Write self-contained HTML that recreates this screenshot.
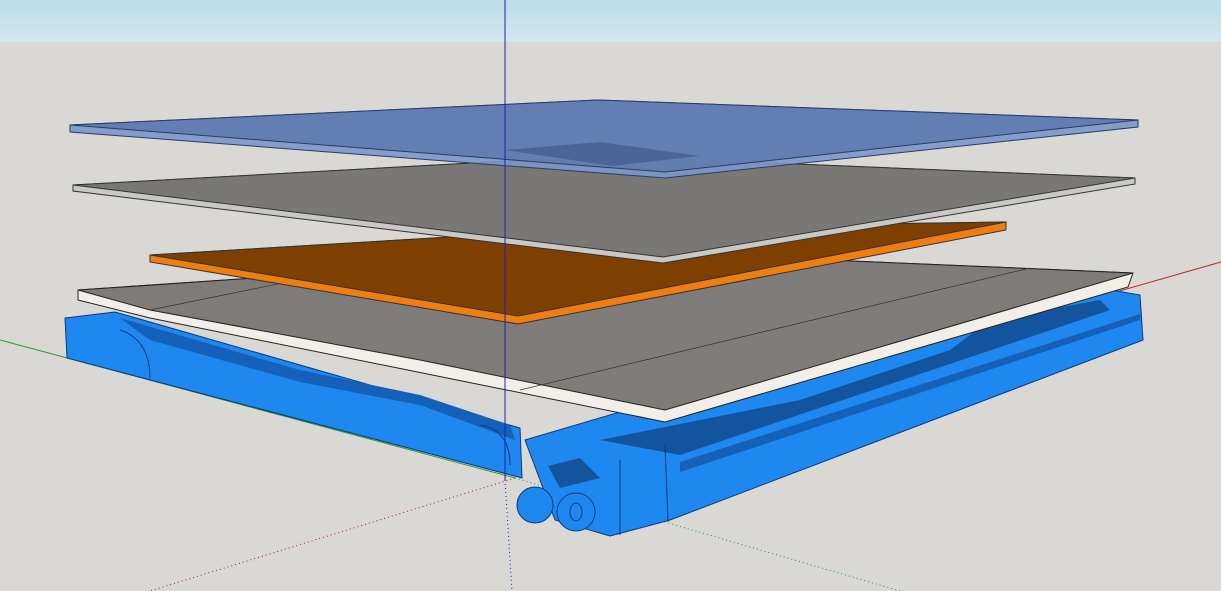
<!DOCTYPE html>
<html><head><meta charset="utf-8"><style>html,body{margin:0;padding:0;width:1221px;height:591px;overflow:hidden;background:#d9d8d4}</style></head>
<body>
<svg width="1221" height="591" viewBox="0 0 1221 591" xmlns="http://www.w3.org/2000/svg">
<defs><linearGradient id="sky" x1="0" y1="0" x2="0" y2="1"><stop offset="0" stop-color="#bcdde9"/><stop offset="1" stop-color="#d3e6ec"/></linearGradient></defs>
<rect width="1221" height="42" fill="url(#sky)"/>
<rect y="42" width="1221" height="549" fill="#d9d8d4"/>
<line x1="0" y1="340" x2="515" y2="478" stroke="#2a9a2a" stroke-width="1"/>
<line x1="515" y1="478" x2="900" y2="591" stroke="#2a9a2a" stroke-width="1" stroke-dasharray="1,3"/>
<line x1="515" y1="478" x2="150" y2="591" stroke="#b02020" stroke-width="1" stroke-dasharray="1,3"/>
<line x1="640" y1="428" x2="1221" y2="262" stroke="#c02020" stroke-width="1"/>
<line x1="505" y1="480" x2="512" y2="591" stroke="#2020b0" stroke-width="1" stroke-dasharray="1,3"/>
<!-- blue frame left -->
<polygon points="65,318 115,312 520,428 522,478 67,358" fill="#1e88f0" stroke="#0a3a80" stroke-width="1"/>
<polygon points="120,318 300,370 420,395 510,425 515,440 420,405 300,382 150,340" fill="#1560b8"/>
<path d="M150,378 Q150,340 120,330" fill="none" stroke="#0a3a80"/>
<path d="M510,465 Q510,430 480,425" fill="none" stroke="#0a3a80"/>
<!-- right arm -->
<polygon points="525,440 1000,300 1100,288 1140,295 1143,340 670,520 610,536 555,520" fill="#1e88f0" stroke="#0a3a80" stroke-width="1"/>
<polygon points="600,440 800,400 950,350 990,320 1100,300 1110,310 680,455" fill="#12549e"/>
<polygon points="680,462 1140,314 1140,320 680,472" fill="#1560b8"/>
<line x1="620" y1="460" x2="620" y2="535" stroke="#0a3a80"/>
<line x1="665" y1="445" x2="668" y2="522" stroke="#0a3a80"/>
<circle cx="535" cy="505" r="18" fill="#1e88f0" stroke="#0a3a80"/>
<circle cx="576" cy="512" r="19" fill="#1e88f0" stroke="#0a3a80"/>
<ellipse cx="576" cy="512" rx="6" ry="9" fill="#1e88f0" stroke="#0a3a80"/>
<polygon points="548,466 580,458 600,478 560,488" fill="#12549e"/>
<!-- big gray plate -->
<polygon points="78,290 640,252 1133,273 1128,287 665,422 150,318 78,300" fill="#f3efe8" stroke="#222" stroke-width="1"/>
<polygon points="78,290 640,252 1133,273 665,410 420,360 150,310" fill="#7e7b78" stroke="#222" stroke-width="1"/>
<line x1="150" y1="310" x2="420" y2="255" stroke="#333" stroke-width="0.7"/>
<line x1="520" y1="390" x2="1030" y2="268" stroke="#333" stroke-width="0.7"/>
<!-- orange plate -->
<polygon points="150,255 600,228 1006,222 1006,230 518,324 150,262" fill="#f07d10" stroke="#333" stroke-width="1"/>
<polygon points="150,255 600,228 1006,222 518,316" fill="#7e4000" stroke="#333" stroke-width="1"/>
<!-- gray plate -->
<polygon points="73,185 600,156 1135,178 1135,184 663,263 73,191" fill="#c9c8c4" stroke="#333" stroke-width="1"/>
<polygon points="73,185 600,156 1135,178 663,257" fill="#7a7876" stroke="#333" stroke-width="1"/>
<!-- blue glass plate -->
<polygon points="70,125 598,100 1138,120 1138,127 665,178 70,132" fill="#7b98c8" stroke="#2a3a6a" stroke-width="1" fill-opacity="0.9"/>
<polygon points="70,125 598,100 1138,120 665,172" fill="#5f7cb0" stroke="#2a3a6a" stroke-width="1" fill-opacity="0.92"/>
<polygon points="505,150 600,142 700,156 612,166" fill="#465f92" fill-opacity="0.8"/>
<line x1="505" y1="0" x2="505" y2="480" stroke="#2020b0" stroke-width="1"/>
</svg>
</body></html>
